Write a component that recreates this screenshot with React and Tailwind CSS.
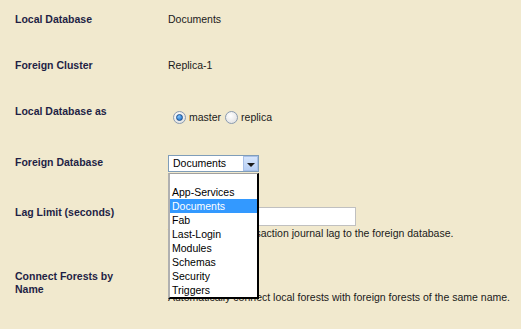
import React from "react";

const options = ["App-Services", "Documents", "Fab", "Last-Login", "Modules", "Schemas", "Security", "Triggers"];

const Label = ({ children }) => (
  <div className="w-[168px] shrink-0 pl-[15px] font-bold leading-[13px] text-[#1f1f45]">{children}</div>
);

const Radio = ({ checked }) => (
  <span className="flex h-[13px] w-[13px] items-center justify-center rounded-full border border-[#8a9bb0] bg-[radial-gradient(circle_at_40%_35%,#ffffff,#dcdcdc)]">
    {checked && (
      <span className="h-[7px] w-[7px] rounded-full border border-[#1b4f8c] bg-[radial-gradient(circle_at_35%_30%,#7fc4ff,#1566c0)]" />
    )}
  </span>
);

const Cursor = () => (
  <svg className="absolute left-[228px] top-[205px]" width="13" height="20" viewBox="0 0 13 20">
    <path d="M0.5 0.5 L0.5 16 L4.3 12.3 L6.8 18.3 L9 17.4 L6.6 11.6 L11.6 11.6 Z" fill="#fff" stroke="#000" strokeWidth="1" strokeLinejoin="round" />
  </svg>
);

export default function App() {
  return (
    <div className="relative h-[329px] w-[521px] overflow-hidden bg-[#f1e9ce] pt-[12px] font-['Liberation_Sans',Arial,sans-serif] text-[10.5px] text-[#1a1a1a]">
      {/* Local Database */}
      <div className="flex h-[46px] pt-px">
        <Label>Local Database</Label>
        <div className="leading-[13px]">Documents</div>
      </div>

      {/* Foreign Cluster */}
      <div className="flex h-[46px] pt-px">
        <Label>Foreign Cluster</Label>
        <div className="leading-[13px]">Replica-1</div>
      </div>

      {/* Local Database as */}
      <div className="flex h-[51px] pt-px">
        <Label>Local Database as</Label>
        <div className="flex h-[20px] items-center pl-[5px] pt-[4px] leading-[13px]">
          <Radio checked />
          <span className="ml-[3px]">master</span>
          <span className="ml-[4px]"><Radio /></span>
          <span className="ml-[3px]">replica</span>
        </div>
      </div>

      {/* Foreign Database */}
      <div className="flex h-[50px] pt-px">
        <Label>Foreign Database</Label>
        <div className="relative z-10 -mt-px">
          <div className="flex h-[17px] w-[91px] border border-[#7f9db9] bg-white">
            <div className="flex-1 pl-[4px] leading-[15px] text-black">Documents</div>
            <div className="flex w-[15px] items-center justify-center border border-[#a8c0e8] bg-[linear-gradient(#d6e5fb,#b7cff5)]">
              <span className="mt-[2px] h-0 w-0 border-x-[4px] border-t-[4px] border-x-transparent border-t-[#1a1a1a]" />
            </div>
          </div>
          {/* open listbox */}
          <div className="absolute left-0 top-[18px] w-[91px] border-t border-l-2 border-r-2 border-b-2 border-t-[#a0a0a0] border-l-[#b0b0b0] border-r-black border-b-black bg-white text-black">
            <div className="h-[11px]" />
            {options.map((o) => (
              <div
                key={o}
                className={
                  o === "Documents"
                    ? "h-[14px] bg-[#3399ff] pl-[2px] leading-[14px] text-white"
                    : "h-[14px] pl-[2px] leading-[14px]"
                }
              >
                {o}
              </div>
            ))}
          </div>
        </div>
      </div>

      {/* Lag Limit */}
      <div className="flex h-[65px] pt-px">
        <Label>Lag Limit (seconds)</Label>
        <div className="flex flex-col">
          <div className="mt-px h-[19px] w-[188px] border border-[#c0c0c0] bg-white" />
          <div className="mt-[1px] whitespace-nowrap leading-[13px]">The maximum transaction journal lag to the foreign database.</div>
        </div>
      </div>

      {/* Connect Forests by Name */}
      <div className="flex">
        <Label>
          Connect Forests by
          <br />
          Name
        </Label>
        <div className="flex flex-col">
          <div className="mt-px h-[13px] w-[13px] border border-[#1c5180] bg-white" />
          <div className="mt-[7px] whitespace-nowrap leading-[13px]">Automatically connect local forests with foreign forests of the same name.</div>
        </div>
      </div>

      <Cursor />
    </div>
  );
}
